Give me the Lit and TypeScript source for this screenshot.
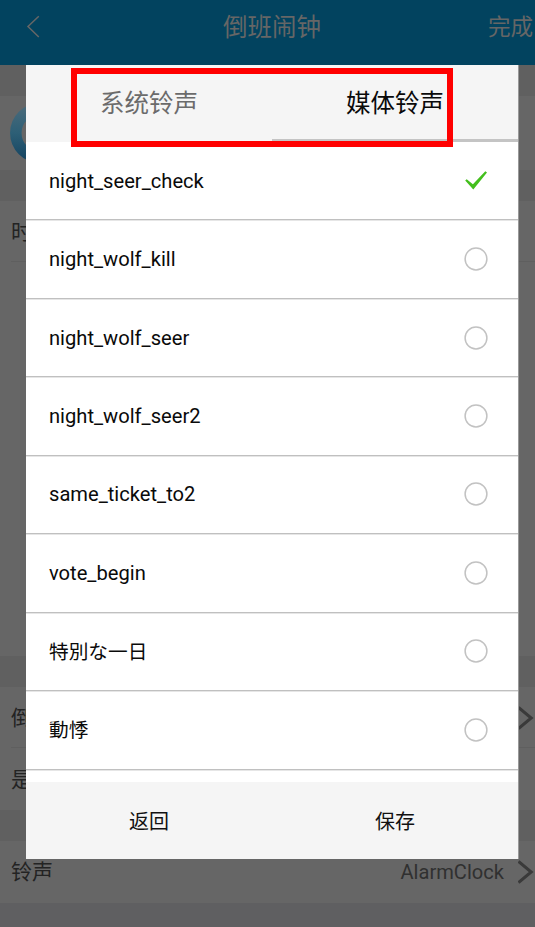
import { LitElement, html, css, svg } from "lit";
import { customElement, property } from "lit/decorators.js";
import { classMap } from "lit/directives/class-map.js";

const chevron = html`<svg class="chevron" width="16" height="24" viewBox="0 0 16 24" fill="none">
  ${svg`<path d="M0.5 1.5 L13.2 12 L0.5 22.5" stroke="#3a3a3a" stroke-width="3" />`}
</svg>`;

@customElement("settings-screen")
class SettingsScreen extends LitElement {
  static styles = css`
    :host {
      display: block;
      height: 927px;
      overflow: hidden;
      background: #5f5f61;
      color: #232323;
      font: 21px/30px Roboto, "Noto Sans CJK SC", sans-serif;
    }
    .bar {
      display: grid;
      grid-template-columns: 70px 1fr 70px;
      align-items: center;
      box-sizing: border-box;
      height: 65px;
      padding-bottom: 11px;
      background: #02435f;
      color: #666;
      white-space: nowrap;
    }
    .back {
      display: block;
      margin-left: 26px;
    }
    .title {
      text-align: center;
      font-size: 24.5px;
      padding: 2px 0 0 9px;
    }
    .done {
      font-size: 22.6px;
      padding: 2px 0 0 23px;
    }
    .gap {
      height: 31px;
      background: #606060;
    }
    .panel {
      background: #666;
    }
    .row {
      display: flex;
      align-items: center;
      box-sizing: border-box;
      padding-left: 11px;
      white-space: nowrap;
    }
    .rule {
      height: 1px;
      margin-left: 11px;
      background: #5f5f5f;
    }
    .logo {
      height: 74px;
      padding-left: 10px;
    }
    .h60 {
      height: 60px;
      padding-top: 2px;
    }
    .h62 {
      height: 62px;
      padding-top: 2px;
    }
    .ringtone {
      padding-top: 0;
    }
    .picker {
      height: 394px;
    }
    .value {
      margin-left: auto;
      margin-right: 14px;
      font-size: 20.1px;
      color: #303030;
    }
    .chevron {
      flex: none;
      margin-right: 1px;
    }
    .push {
      margin-left: auto;
    }
  `;

  render() {
    return html`
      <div class="bar">
        <svg class="back" width="15" height="24" viewBox="0 0 15 24" fill="none">
          <path d="M12.8 1.2 L2 11.5 L12.8 22" stroke="#666" stroke-width="1.5" />
        </svg>
        <div class="title">倒班闹钟</div>
        <div class="done">完成</div>
      </div>
      <div class="gap"></div>
      <div class="panel row logo">
        <svg width="60" height="60" viewBox="0 0 60 60" fill="none">
          <defs>
            <linearGradient id="ring" x1="0" y1="0" x2="0" y2="1">
              <stop offset="0" stop-color="#47697a" />
              <stop offset="0.5" stop-color="#2d5f76" />
              <stop offset="1" stop-color="#184763" />
            </linearGradient>
          </defs>
          <circle cx="30" cy="30" r="24.2" stroke="url(#ring)" stroke-width="11.5" />
        </svg>
      </div>
      <div class="gap"></div>
      <div class="panel">
        <div class="row h60">时间</div>
        <div class="rule"></div>
        <div class="picker"></div>
      </div>
      <div class="gap"></div>
      <div class="panel">
        <div class="row h60">倒班<span class="push"></span>${chevron}</div>
        <div class="rule"></div>
        <div class="row h62">是否</div>
      </div>
      <div class="gap"></div>
      <div class="panel row h62 ringtone">铃声<span class="value">AlarmClock</span>${chevron}</div>
    `;
  }
}

@customElement("ringtone-row")
class RingtoneRow extends LitElement {
  @property() name = "";
  @property({ type: Boolean }) checked = false;

  static styles = css`
    :host {
      display: flex;
      align-items: center;
      justify-content: space-between;
      box-sizing: border-box;
      height: 78.45px;
      padding: 0 30px 0 23px;
      border-bottom: 1px solid #c0c0c0;
      box-shadow: 0 1px 0 #e6e6e6;
      color: #0a0a0a;
      font: 20.15px/30px Roboto, "Noto Sans CJK JP", sans-serif;
      white-space: nowrap;
    }
    .cjk {
      font-size: 19.7px;
      padding-top: 3px;
    }
    svg {
      display: block;
      flex: none;
    }
  `;

  render() {
    const cjk = /[^\x00-\x7f]/.test(this.name);
    return html`
      <span class=${classMap({ cjk })}>${this.name}</span>
      <svg width="24" height="24" viewBox="0 0 24 24" fill="none">
        ${this.checked
          ? svg`<path d="M1.2 11.6 L2.7 10.3 L8.9 15.2 L21.3 2.3 L23 3.6 L9.3 20.6 Z" fill="#43bf1d" />`
          : svg`<circle cx="12" cy="12" r="10.9" stroke="#c2c2c2" stroke-width="1.5" />`}
      </svg>
    `;
  }
}

@customElement("app-root")
class AppRoot extends LitElement {
  static styles = css`
    :host {
      display: block;
      position: relative;
      height: 927px;
      overflow: hidden;
      font-family: Roboto, "Noto Sans CJK SC", sans-serif;
    }
    .dialog {
      position: absolute;
      left: 26px;
      top: 65px;
      width: 492px;
      height: 794px;
      display: flex;
      flex-direction: column;
      background: #fff;
      border-right: 1px solid #999;
    }
    .tabs,
    .actions {
      display: grid;
      grid-template-columns: 1fr 1fr;
      flex: none;
      height: 77px;
      background: #f5f5f5;
      text-align: center;
    }
    .tab {
      box-sizing: border-box;
      height: 77px;
      padding-top: 2px;
      font-size: 24.5px;
      line-height: 74px;
      color: #6b6b6b;
    }
    .active {
      color: #0a0a0a;
      border-bottom: 3px solid #c4c4c4;
    }
    .list {
      flex: 1;
      min-height: 0;
      overflow: hidden;
    }
    .action {
      padding-top: 2px;
      font-size: 20px;
      line-height: 77px;
      color: #111;
    }
    .highlight {
      position: absolute;
      left: 71px;
      top: 68px;
      box-sizing: border-box;
      width: 382px;
      height: 79px;
      border: 6px solid #f00;
    }
  `;

  private tabs = ["系统铃声", "媒体铃声"];
  private tones = [
    "night_seer_check",
    "night_wolf_kill",
    "night_wolf_seer",
    "night_wolf_seer2",
    "same_ticket_to2",
    "vote_begin",
    "特別な一日",
    "動悸",
  ];

  render() {
    return html`
      <settings-screen></settings-screen>
      <div class="dialog">
        <div class="tabs">
          ${this.tabs.map(
            (label, i) => html`<div class=${classMap({ tab: true, active: i === 1 })}>${label}</div>`
          )}
        </div>
        <div class="list">
          ${this.tones.map(
            (name, i) => html`<ringtone-row .name=${name} .checked=${i === 0}></ringtone-row>`
          )}
        </div>
        <div class="actions">
          <div class="action">返回</div>
          <div class="action">保存</div>
        </div>
      </div>
      <div class="highlight"></div>
    `;
  }
}
